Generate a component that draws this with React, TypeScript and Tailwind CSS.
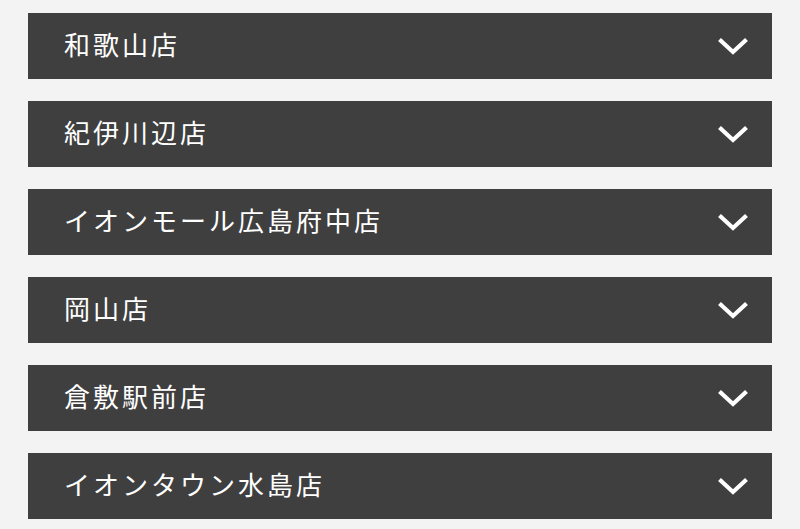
import React from 'react';

const stores = [
  '和歌山店',
  '紀伊川辺店',
  'イオンモール広島府中店',
  '岡山店',
  '倉敷駅前店',
  'イオンタウン水島店',
];

const Chevron: React.FC = () => (
  <svg width="32" height="18" viewBox="0 0 32 18" fill="none" className="block">
    <polyline
      points="2.5,2.5 16,15 29.5,2.5"
      stroke="#ffffff"
      strokeWidth="4.2"
      strokeLinejoin="miter"
      strokeLinecap="butt"
    />
  </svg>
);

const App: React.FC = () => {
  return (
    <div
      className="min-h-[529px] w-full bg-[#f3f3f3] px-[28px] pt-[13px]"
      style={{ fontFamily: '"Noto Sans CJK JP", "Noto Sans", sans-serif' }}
    >
      <div className="flex flex-col gap-[22px]">
        {stores.map((name) => (
          <button
            key={name}
            type="button"
            className="flex h-[66px] w-full items-center justify-between bg-[#3f3f3f] pl-[36px] pr-[23px] text-left"
          >
            <span className="-mt-[4px] text-[26px] leading-none tracking-[3px] text-white">
              {name}
            </span>
            <Chevron />
          </button>
        ))}
      </div>
    </div>
  );
};

export default App;
